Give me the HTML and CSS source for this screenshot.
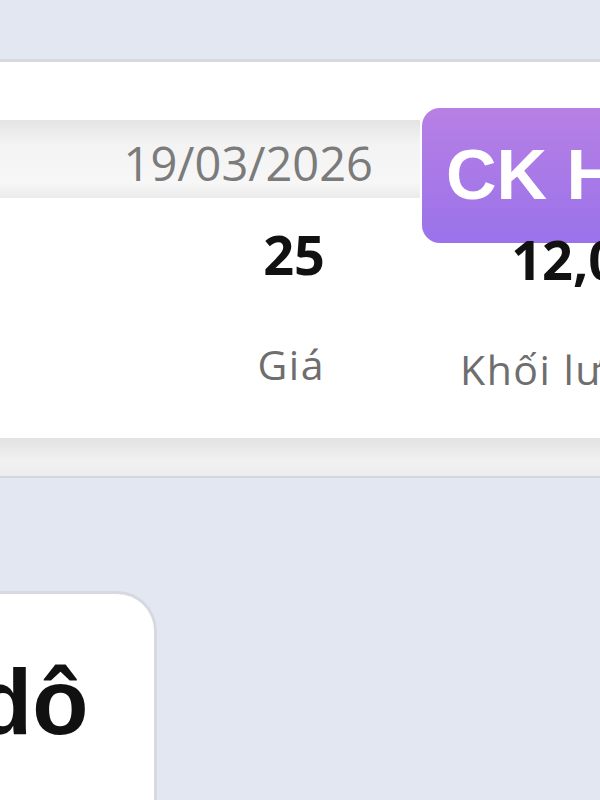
FILE: index.html
```html
<!DOCTYPE html>
<html lang="vi">
<head>
    <meta charset="UTF-8">
    <meta name="viewport" content="width=device-width, initial-scale=1.0">
    <title>Giao dịch</title>
    <link rel="stylesheet" href="styles.css">
</head>
<body>

    <!-- The trade card -->
    <div class="trade-card">
        <div class="trade-head">
            <div class="date-bar">19/03/2026</div>
            <div class="badge">CK HN</div>
        </div>
        <div class="trade-values">
            <div class="cell">
                <div class="value">25</div>
                <div class="label">Giá</div>
            </div>
            <div class="cell cell-shift">
                <div class="value">12,000</div>
                <div class="label">Khối lượng</div>
            </div>
        </div>
    </div>
    <div class="card-foot"></div>

    <!-- Next card -->
    <div class="next-card">
        <div class="next-title">dô</div>
    </div>

</body>
</html>
```

FILE: styles.css
```css
html, body {
    margin: 0;
    padding: 0;
    overflow: hidden;
}
body {
    background-color: #e3e7f1;
    font-family: 'Open Sans', 'Noto Sans', sans-serif;
    height: 800px;
}
.trade-card {
    margin-top: 59px;
    border-top: 3px solid #d8d9dc;
    background-color: #fff;
    height: 379px;
    width: 720px;
    padding-top: 46px;
    box-sizing: border-box;
}
.trade-head {
    display: flex;
    align-items: flex-start;
    height: 135px;
    margin-bottom: -19px;
}
.date-bar {
    width: 420px;
    height: 78px;
    margin-top: 12px;
    box-sizing: border-box;
    padding-right: 47px;
    text-align: right;
    font-size: 47px;
    line-height: 86px;
    color: #7b7b7b;
    background: linear-gradient(#e4e4e4, #f3f3f3 30%, #f7f7f7 80%, #ebebeb);
}
.badge {
    margin-left: 2px;
    height: 135px;
    flex: 1;
    border-radius: 18px;
    padding-left: 24px;
    box-sizing: border-box;
    background: linear-gradient(#b780e4, #9a72ea);
    color: #fff;
    font-family: 'Liberation Sans', Arial, sans-serif;
    font-weight: bold;
    font-size: 70px;
    line-height: 135px;
    white-space: nowrap;
    overflow: hidden;
}
.trade-values {
    display: grid;
    grid-template-columns: 325px 356px;
}
.cell {
    text-align: right;
    white-space: nowrap;
}
.cell-shift {
    padding-top: 5px;
}
.value {
    font-weight: bold;
    font-size: 54px;
    line-height: 60px;
    color: #111;
}
.label {
    margin-top: 55px;
    font-size: 41px;
    line-height: 50px;
    letter-spacing: 1.5px;
    color: #6e6e6e;
}
.card-foot {
    height: 38px;
    background: linear-gradient(#e2e2e2, #f1f1f1 60%, #ededed);
    border-bottom: 2px solid #d3d6dc;
}
.next-card {
    margin-top: 113px;
    width: 154px;
    height: 260px;
    background-color: #fff;
    border-top-right-radius: 40px;
    border-right: 3px solid #d6d9e0;
    border-top: 3px solid #d6d9e0;
    overflow: hidden;
}
.next-title {
    margin-top: 58px;
    margin-left: -24px;
    font-family: 'Liberation Sans', Arial, sans-serif;
    font-weight: bold;
    font-size: 92px;
    line-height: 100px;
    color: #111;
}
```
